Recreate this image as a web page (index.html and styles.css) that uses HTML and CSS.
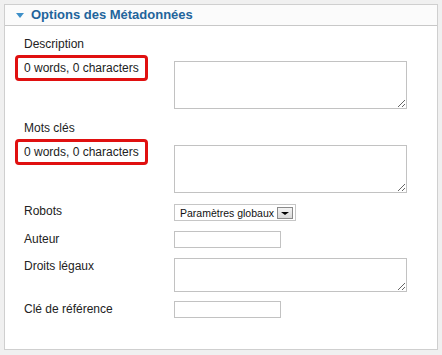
FILE: index.html
```html
<!DOCTYPE html>
<html lang="fr">

<head>
  <meta charset="UTF-8">
  <title>Options des Métadonnées</title>
  <link rel="stylesheet" href="styles.css">
</head>

<body>
  <div class="panel">
    <div class="panel-header">
      <span class="toggle"></span>
      <span class="panel-title">Options des Métadonnées</span>
    </div>

    <div class="panel-body">
      <div class="row">
        <div class="label-col">
          <label for="metadesc">Description</label>
          <div class="counter">0 words, 0 characters</div>
        </div>
        <textarea id="metadesc" class="field-area tall"></textarea>
      </div>

      <div class="row spaced">
        <div class="label-col">
          <label for="metakey">Mots clés</label>
          <div class="counter">0 words, 0 characters</div>
        </div>
        <textarea id="metakey" class="field-area tall"></textarea>
      </div>

      <div class="row">
        <div class="label-col">
          <label>Robots</label>
        </div>
        <div class="fake-select">
          <span class="fake-select-text">Paramètres globaux</span>
          <span class="fake-select-btn"><span class="arrow"></span></span>
        </div>
      </div>

      <div class="row">
        <div class="label-col">
          <label for="author">Auteur</label>
        </div>
        <input id="author" class="field-input" type="text">
      </div>

      <div class="row">
        <div class="label-col">
          <label for="rights">Droits légaux</label>
        </div>
        <textarea id="rights" class="field-area short"></textarea>
      </div>

      <div class="row tight">
        <div class="label-col">
          <label for="xreference">Clé de référence</label>
        </div>
        <input id="xreference" class="field-input" type="text">
      </div>
    </div>
  </div>
</body>

</html>
```

FILE: styles.css
```css
body {
  font-family: 'Liberation Sans', Arial, sans-serif;
  font-size: 12px;
  color: #222;
  background-color: #f0f0f0;
  margin: 0;
  padding: 4px;
}

.panel {
  width: 434px;
  height: 346px;
  box-sizing: border-box;
  background-color: #ffffff;
  border: 1px solid #cfcfcf;
}

.panel-header {
  display: flex;
  align-items: center;
  height: 20px;
  padding-left: 11px;
  border-bottom: 1px solid #c8c8c8;
  background-color: #fbfbfb;
}

.toggle {
  width: 0;
  height: 0;
  border-left: 4px solid transparent;
  border-right: 4px solid transparent;
  border-top: 5px solid #3d8fc8;
  margin-right: 7px;
}

.panel-title {
  font-size: 13px;
  font-weight: bold;
  line-height: 20px;
  color: #22649b;
}

.panel-body {
  display: flex;
  flex-direction: column;
  gap: 10px;
  padding: 10px 0 0 10px;
}

.row {
  display: flex;
  align-items: flex-start;
}

.row.spaced {
  margin-top: 1px;
}

.row.tight {
  margin-top: -1px;
}

.label-col {
  width: 159px;
  flex-shrink: 0;
}

.label-col label {
  display: block;
  padding-left: 9px;
  line-height: 16px;
}

.counter {
  display: inline-block;
  margin-top: 3px;
  padding: 3px 6px;
  line-height: 14px;
  border: 3px solid #e01010;
  border-radius: 4px;
}

.field-area {
  box-sizing: border-box;
  width: 233px;
  margin: 0;
  padding: 2px;
  border: 1px solid #c2c2c2;
  font-family: inherit;
  font-size: 12px;
}

.field-area.tall {
  height: 48px;
  margin-top: 25px;
}

.field-area.short {
  height: 34px;
}

.field-input {
  box-sizing: border-box;
  width: 107px;
  height: 17px;
  margin: 0;
  padding: 1px 3px;
  border: 1px solid #c2c2c2;
  font-family: inherit;
  font-size: 12px;
}

.fake-select {
  display: flex;
  align-items: center;
  box-sizing: border-box;
  width: 122px;
  height: 17px;
  margin-top: 1px;
  padding: 0 2px 0 5px;
  border: 1px solid #c6c6c6;
  font-size: 10.5px;
  color: #111;
}

.fake-select-text {
  flex-grow: 1;
  overflow: hidden;
  white-space: nowrap;
}

.fake-select-btn {
  display: flex;
  align-items: center;
  justify-content: center;
  flex-shrink: 0;
  box-sizing: border-box;
  width: 16px;
  height: 12px;
  margin-left: 2px;
  border: 1px solid #8a8a8a;
  background: linear-gradient(#f4f4f4, #d8d8d8);
}

.arrow {
  width: 0;
  height: 0;
  margin-top: 2px;
  border-left: 4px solid transparent;
  border-right: 4px solid transparent;
  border-top: 3px solid #000;
}
```
